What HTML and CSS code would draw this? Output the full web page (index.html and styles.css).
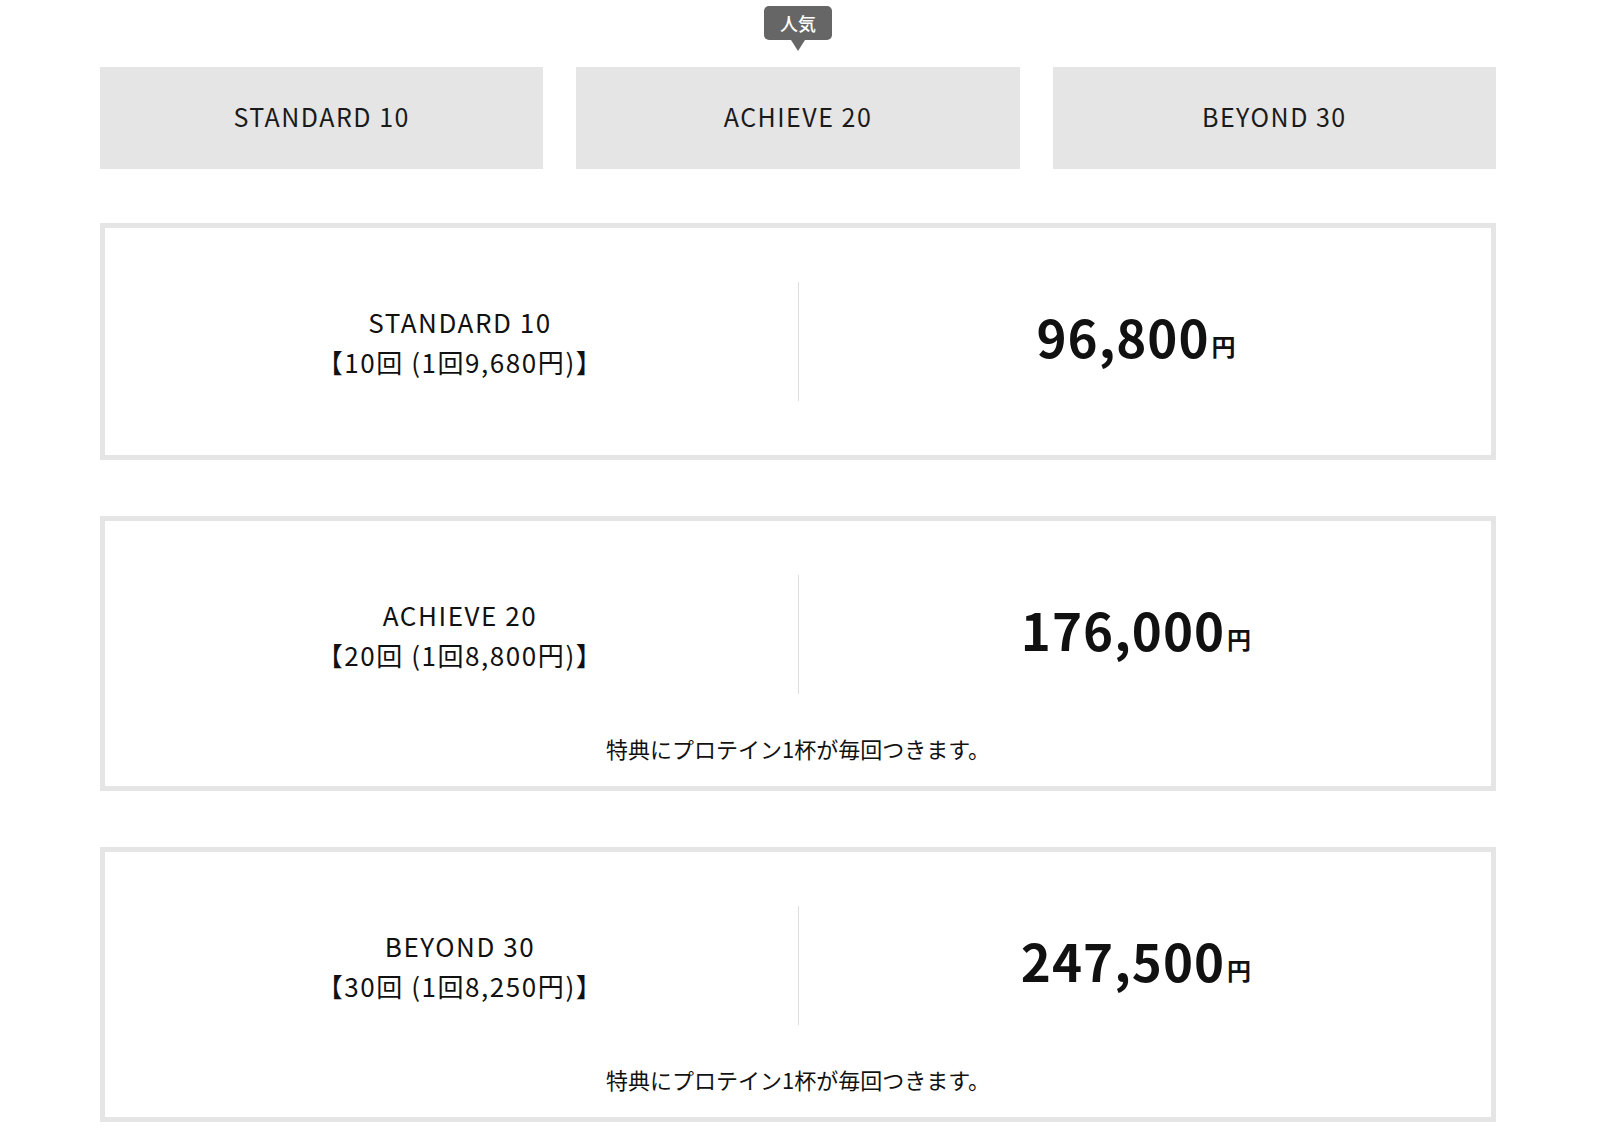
FILE: index.html
```html
<!DOCTYPE html>
<html lang="ja">
<head>
	<meta charset="UTF-8">
	<title>料金プラン</title>
	<link rel="stylesheet" href="styles.css">
</head>
<body>
<div id="plans">
	<ul class="tabs">
		<li class="tab">STANDARD 10</li>
		<li class="tab">
			<span class="badge">人気</span>
			ACHIEVE 20
		</li>
		<li class="tab">BEYOND 30</li>
	</ul>

	<div class="card">
		<div class="row">
			<div class="name">
				<p>STANDARD 10</p>
				<p>【10回 (1回9,680円)】</p>
			</div>
			<div class="price">96,800<span class="yen">円</span></div>
		</div>
	</div>

	<div class="card card-bonus">
		<div class="row">
			<div class="name">
				<p>ACHIEVE 20</p>
				<p>【20回 (1回8,800円)】</p>
			</div>
			<div class="price">176,000<span class="yen">円</span></div>
		</div>
		<p class="note">特典にプロテイン1杯が毎回つきます。</p>
	</div>

	<div class="card card-bonus">
		<div class="row">
			<div class="name">
				<p>BEYOND 30</p>
				<p>【30回 (1回8,250円)】</p>
			</div>
			<div class="price">247,500<span class="yen">円</span></div>
		</div>
		<p class="note">特典にプロテイン1杯が毎回つきます。</p>
	</div>
	<!-- /.card -->
</div>
</body>
</html>
```

FILE: styles.css
```css
* {
	padding: 0;
	margin: 0;
	box-sizing: border-box;
}

li {
	list-style: none;
}

body {
	background-color: #fff;
	color: #111;
	font-family: "Noto Sans CJK JP", "Noto Sans", sans-serif;
}

#plans {
	width: 1396px;
	margin-left: 100px;
	padding-top: 67px;
}

.tabs {
	display: grid;
	grid-template-columns: 1fr 1fr 1fr;
	gap: 33px;
	margin-bottom: 54px;
}

.tab {
	position: relative;
	height: 102px;
	padding-bottom: 4px;
	display: flex;
	align-items: center;
	justify-content: center;
	background-color: #e5e5e5;
	font-size: 25px;
	letter-spacing: 0.06em;
	color: #1a1a1a;
}

.badge {
	position: absolute;
	left: 50%;
	bottom: calc(100% + 27px);
	width: 68px;
	height: 34px;
	margin-left: -34px;
	border-radius: 5px;
	background-color: #666;
	color: #fff;
	font-size: 18px;
	font-weight: 500;
	letter-spacing: 0;
	line-height: 34px;
	text-align: center;
}

.badge::after {
	content: "";
	position: absolute;
	left: 50%;
	top: 100%;
	margin-left: -7px;
	border-top: 11px solid #666;
	border-left: 7px solid transparent;
	border-right: 7px solid transparent;
}

.card {
	border: 5px solid #e5e5e5;
	padding: 54px 0;
	margin-bottom: 56px;
}

.card-bonus {
	padding-bottom: 23px;
}

.row {
	display: grid;
	grid-template-columns: 1fr 1fr;
	height: 119px;
	padding: 0 17px;
}

.name {
	display: flex;
	flex-direction: column;
	justify-content: center;
	align-items: center;
	font-size: 26px;
	letter-spacing: 0.06em;
	line-height: 40px;
}

.price {
	display: flex;
	justify-content: center;
	align-items: center;
	padding-bottom: 10px;
	border-left: 1px solid #ddd;
	font-size: 51px;
	font-weight: 700;
	letter-spacing: 0.02em;
	line-height: 1;
}

.yen {
	font-size: 24px;
	margin-top: 18px;
	margin-left: 2px;
}

.note {
	margin-top: 39px;
	font-size: 22px;
	line-height: 30px;
	text-align: center;
}
```
